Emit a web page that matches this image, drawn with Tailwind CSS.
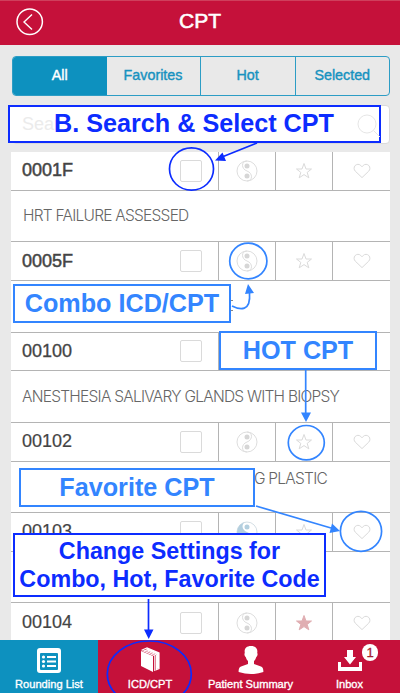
<!DOCTYPE html>
<html lang="en">
<head>
    <meta charset="UTF-8">
    <meta name="viewport" content="width=device-width, initial-scale=1.0">
    <title>CPT</title>
    <script src="https://cdn.jsdelivr.net/npm/@tailwindcss/browser@4"></script>
</head>
<body class="bg-[#e9e9e9] font-['Liberation_Sans',Arial,sans-serif]">
    <div class="relative flex h-[693px] w-[400px] flex-col overflow-hidden">
        <!-- Shared icons -->
        <svg class="hidden">
            <symbol id="combo" viewBox="0 0 22 22">
                <circle cx="11" cy="11" r="10" fill="none" stroke="#dedede"/>
                <path d="M11 1C5 1 5 9 11 11C17 13 17 21 11 21" fill="none" stroke="#dedede"/>
                <circle cx="11" cy="6" r="2.5" fill="#d6d6d6"/>
                <circle cx="11" cy="16" r="2.5" fill="#d6d6d6"/>
            </symbol>
            <symbol id="star" viewBox="0 0 18 18">
                <path d="M9 1.5L11 7H16.5L12.2 10.4L13.8 15.8L9 12.6L4.2 15.8L5.8 10.4L1.5 7H7Z" stroke-linejoin="round"/>
            </symbol>
            <symbol id="heart" viewBox="0 0 18 16">
                <path d="M9 14.6L2.3 8.2C.8 6.6.7 4.2 2.1 2.6C3.6 1 6.2.9 7.7 2.4L9 3.8L10.3 2.4C11.8.9 14.4 1 15.9 2.6C17.3 4.2 17.2 6.6 15.7 8.2Z" fill="none" stroke="#dadada"/>
            </symbol>
        </svg>

        <!-- Header -->
        <header class="relative flex h-[45px] shrink-0 items-center justify-center border-t border-[#cf3f5c] bg-[#c5113a] pb-1">
            <svg class="absolute top-[7px] left-4" width="28" height="28" viewBox="0 0 28 28" fill="none" stroke="#fff">
                <circle cx="13.7" cy="13.8" r="12.7" stroke-width="1.5"/>
                <path d="M16 6.5L8 14L16 21.5" stroke-width="1.4"/>
            </svg>
            <h1 class="text-[21px] text-white [-webkit-text-stroke:0.6px_white]">CPT</h1>
        </header>

        <!-- Filter tabs -->
        <nav class="mt-[11px] mr-[10px] ml-3 flex h-10 shrink-0 overflow-hidden rounded border border-[#2d9dc5] text-[14.3px] text-[#1792bf] [-webkit-text-stroke:0.4px_#1792bf]">
            <div class="flex w-[93.5px] items-center justify-center bg-[#0d91bf] text-white [-webkit-text-stroke:0.4px_white]">All</div>
            <div class="flex w-[94px] items-center justify-center border-r border-[#2d9dc5]">Favorites</div>
            <div class="flex w-[95px] items-center justify-center border-r border-[#2d9dc5]">Hot</div>
            <div class="flex flex-1 items-center justify-center">Selected</div>
        </nav>

        <!-- Search -->
        <div class="mt-[9px] mr-[10px] ml-3 flex h-[39px] shrink-0 items-center rounded border border-[#dadada] bg-white pl-[9px] text-[18px] text-[#e8e8e8]">Search</div>

        <!-- Code list -->
        <main class="mt-2 mr-[10px] ml-[11px] h-[489px] shrink-0 overflow-hidden bg-white text-[18px] text-[#444]">
            <div class="flex h-[38.75px] items-center border-b border-[#b4b4b4]">
                <span class="w-[169px] pl-[11px] [-webkit-text-stroke:0.5px_#444]">0001F</span>
                <span class="h-[22px] w-[22px] rounded-xs border border-[#dadada]"></span>
                <span class="ml-4 flex h-full w-[57px] items-center justify-center border-l border-[#b4b4b4]"><svg width="22" height="22"><use href="#combo"/></svg></span>
                <span class="flex h-full w-[57px] items-center justify-center border-l border-[#b4b4b4]"><svg class="fill-none stroke-[#dadada]" width="18" height="18"><use href="#star"/></svg></span>
                <span class="flex h-full flex-1 items-center justify-center border-l border-[#b4b4b4]"><svg width="18" height="16"><use href="#heart"/></svg></span>
            </div>
            <div class="flex h-[51.5px] items-center border-b border-[#b4b4b4] pl-3 font-[Inter] text-[15.5px] font-light tracking-[-0.75px] text-[#666]">HRT FAILURE ASSESSED</div>

            <div class="flex h-[38.75px] items-center border-b border-[#b4b4b4]">
                <span class="w-[169px] pl-[11px] [-webkit-text-stroke:0.5px_#444]">0005F</span>
                <span class="h-[22px] w-[22px] rounded-xs border border-[#dadada]"></span>
                <span class="ml-4 flex h-full w-[57px] items-center justify-center border-l border-[#b4b4b4]"><svg width="22" height="22"><use href="#combo"/></svg></span>
                <span class="flex h-full w-[57px] items-center justify-center border-l border-[#b4b4b4]"><svg class="fill-none stroke-[#dadada]" width="18" height="18"><use href="#star"/></svg></span>
                <span class="flex h-full flex-1 items-center justify-center border-l border-[#b4b4b4]"><svg width="18" height="16"><use href="#heart"/></svg></span>
            </div>
            <div class="h-[51.5px] border-b border-[#b4b4b4]"></div>

            <div class="flex h-[38.75px] items-center border-b border-[#b4b4b4]">
                <span class="w-[169px] pl-[11px] [-webkit-text-stroke:0.3px_#444]">00100</span>
                <span class="h-[22px] w-[22px] rounded-xs border border-[#dadada]"></span>
                <span class="ml-4 flex h-full w-[57px] items-center justify-center border-l border-[#b4b4b4]"><svg width="22" height="22"><use href="#combo"/></svg></span>
                <span class="flex h-full w-[57px] items-center justify-center border-l border-[#b4b4b4]"><svg class="fill-none stroke-[#dadada]" width="18" height="18"><use href="#star"/></svg></span>
                <span class="flex h-full flex-1 items-center justify-center border-l border-[#b4b4b4]"><svg width="18" height="16"><use href="#heart"/></svg></span>
            </div>
            <div class="flex h-[51.5px] items-center border-b border-[#b4b4b4] pl-[11px] font-[Inter] text-[15.5px] font-light tracking-[-0.75px] whitespace-nowrap text-[#666]">ANESTHESIA SALIVARY GLANDS WITH BIOPSY</div>

            <div class="flex h-[38.75px] items-center border-b border-[#b4b4b4]">
                <span class="w-[169px] pl-[11px] [-webkit-text-stroke:0.2px_#444]">00102</span>
                <span class="h-[22px] w-[22px] rounded-xs border border-[#dadada]"></span>
                <span class="ml-4 flex h-full w-[57px] items-center justify-center border-l border-[#b4b4b4]"><svg class="-scale-x-100" width="22" height="22"><use href="#combo"/></svg></span>
                <span class="flex h-full w-[57px] items-center justify-center border-l border-[#b4b4b4]"><svg class="fill-none stroke-[#dadada]" width="18" height="18"><use href="#star"/></svg></span>
                <span class="flex h-full flex-1 items-center justify-center border-l border-[#b4b4b4]"><svg width="18" height="16"><use href="#heart"/></svg></span>
            </div>
            <div class="flex h-[51.5px] items-start justify-end border-b border-[#b4b4b4] pt-[5px] pr-[63px] font-[Inter] text-[15.5px] font-light tracking-[-0.75px] text-[#666]">G PLASTIC</div>

            <div class="flex h-[38.75px] items-center border-b border-[#b4b4b4]">
                <span class="w-[169px] pl-[11px] [-webkit-text-stroke:0.2px_#444]">00103</span>
                <span class="h-[22px] w-[22px] rounded-xs border border-[#dadada]"></span>
                <span class="ml-4 flex h-full w-[57px] items-center justify-center border-l border-[#b4b4b4]">
                    <svg width="22" height="22" viewBox="0 0 22 22">
                        <circle cx="11" cy="11" r="10" fill="#fff" stroke="#d5dfe5"/>
                        <path d="M11 1C5 1 5 9 11 11C17 13 17 21 11 21A10 10 0 0 1 11 1Z" fill="#b3cfdf"/>
                        <circle cx="11" cy="6" r="2.5" fill="#b3cfdf"/>
                        <circle cx="11" cy="16" r="2.5" fill="#fff"/>
                    </svg>
                </span>
                <span class="flex h-full w-[57px] items-center justify-center border-l border-[#b4b4b4]"><svg class="fill-none stroke-[#dadada]" width="18" height="18"><use href="#star"/></svg></span>
                <span class="flex h-full flex-1 items-center justify-center border-l border-[#b4b4b4]"><svg width="18" height="16"><use href="#heart"/></svg></span>
            </div>
            <div class="h-[51.5px] border-b border-[#b4b4b4]"></div>

            <div class="flex h-[38.75px] items-center">
                <span class="w-[169px] pl-[11px] [-webkit-text-stroke:0.2px_#444]">00104</span>
                <span class="h-[22px] w-[22px] rounded-xs border border-[#dadada]"></span>
                <span class="ml-4 flex h-full w-[57px] items-center justify-center border-l border-[#b4b4b4]"><svg width="22" height="22"><use href="#combo"/></svg></span>
                <span class="flex h-full w-[57px] items-center justify-center border-l border-[#b4b4b4]"><svg class="fill-[#e0aeb2] stroke-[#e0aeb2]" width="18" height="18"><use href="#star"/></svg></span>
                <span class="flex h-full flex-1 items-center justify-center border-l border-[#b4b4b4]"><svg width="18" height="16"><use href="#heart"/></svg></span>
            </div>
        </main>

        <!-- Bottom bar -->
        <footer class="-mt-px flex h-[53px] shrink-0 bg-[#c5113a] text-[11.1px] leading-4 text-white [-webkit-text-stroke:0.35px_white]">
            <div class="flex w-[98px] flex-col items-center bg-[#0d91bf] pt-[7px]">
                <svg width="26" height="26" viewBox="0 0 26 26">
                    <rect x="1" y="1" width="24" height="25" rx="3" fill="#fff"/>
                    <rect x="4" y="6" width="18" height="17" rx="1" fill="#0d91bf"/>
                    <path d="M11 10H20M11 14.5H20M11 19H20" stroke="#fff" stroke-width="2"/>
                    <g fill="#fff"><circle cx="7.5" cy="10" r="1.6"/><circle cx="7.5" cy="14.5" r="1.6"/><circle cx="7.5" cy="19" r="1.6"/></g>
                </svg>
                <span class="mt-[3px]">Rounding List</span>
            </div>
            <div class="flex w-[104px] flex-col items-center pt-[7px]">
                <svg width="20" height="26" viewBox="0 0 20 26">
                    <path d="M1 4L13 9V25L1 19Z" fill="#fff"/>
                    <path d="M1.5 3.2L7 1L19 6V21.5L16.5 22.5V8L5.5 3.3L3.5 4L14.8 8.8V24" fill="none" stroke="#fff" stroke-width="1.2"/>
                    <path d="M7 1L19 6V21L17 22V7.5L6 3Z" fill="#fff"/>
                </svg>
                <span class="mt-[3px]">ICD/CPT</span>
            </div>
            <div class="flex w-[97px] flex-col items-center pt-1">
                <svg width="26" height="30" viewBox="0 0 26 30" fill="#fff">
                    <path d="M13 2C8 2 6 5 6.8 9C6 10 6.6 12 7.7 13C8.3 15 9 16 10 17V20L3 22.5C1 23.5.6 25 .6 28Q7 30 13 30Q19 30 25.4 28C25.4 25 25 23.5 23 22.5L16 20V17C17 16 17.7 15 18.3 13C19.4 12 20 10 19.2 9C20 5 18 2 13 2Z"/>
                </svg>
                <span class="mt-[2px] whitespace-nowrap">Patient Summary</span>
            </div>
            <div class="relative flex flex-1 flex-col items-center pt-[9px]">
                <svg width="26" height="24" viewBox="0 0 26 24" fill="#fff">
                    <path d="M10 1H16V8H19L13 15.5L7 8H10Z"/>
                    <path d="M1 13H4V18H22V13H25V22H1Z"/>
                </svg>
                <span class="mt-[3px]">Inbox</span>
                <span class="absolute top-1 left-[63px] flex h-[17px] w-4 items-center justify-center rounded-full bg-white text-[13px] text-[#a52030] [-webkit-text-stroke:0.3px_#a52030]">1</span>
            </div>
        </footer>

        <!-- Callout arrows and rings -->
        <svg class="absolute inset-0" width="400" height="693" fill="none" stroke-width="2">
            <g stroke="#0c2cff" stroke-width="1.7">
                <ellipse cx="191.5" cy="169" rx="22" ry="21.2"/>
                <path d="M257 143L222 157M148.5 599V630"/>
                <ellipse cx="149.3" cy="674" rx="42" ry="33"/>
                <path d="M215 160.5L222.5 152.5L226 161ZM144 629.5H153.5L148.7 639Z" fill="#0c2cff" stroke="none"/>
            </g>
            <g stroke="#3385ff" stroke-width="1.7">
                <ellipse cx="248.3" cy="261" rx="18.6" ry="17.8"/>
                <path d="M232 306C240 310 251 312 249.5 293"/>
                <path d="M305.7 370V413"/>
                <ellipse cx="306.3" cy="442.7" rx="18" ry="17.2"/>
                <path d="M256 506L331 528"/>
                <ellipse cx="361" cy="531.3" rx="20.6" ry="20"/>
                <path d="M248 284L254 293L245 294ZM301 412.5H311L306 422ZM340 531L329.5 533L332 523.5Z" fill="#3385ff" stroke="none"/>
            </g>
            <path d="M231 300.5H233M231 310.5H233" stroke="#888" stroke-width="1"/>
        </svg>

        <!-- Callout labels -->
        <div class="absolute top-[105px] left-[8px] flex h-[38px] w-[373px] items-center justify-center border-2 border-[#0c2cff] bg-white pr-px text-[25.2px] font-bold whitespace-nowrap text-[#0c2cff]">
            <span class="absolute left-3 text-[18px] font-normal text-[#ebebeb]">Sear</span>
            <svg class="absolute top-[6px] right-[-3px]" width="26" height="26" fill="none" stroke="#e6e6e6"><circle cx="11" cy="11" r="9"/><path d="M17.5 17.5L24 24"/></svg>
            <span class="relative">B. Search &amp; Select CPT</span>
        </div>
        <div class="absolute top-[284px] left-[13px] flex h-[39px] w-[218px] items-center justify-center border-2 border-[#3385ff] bg-white text-[25.2px] font-bold whitespace-nowrap text-[#3385ff]">Combo ICD/CPT</div>
        <div class="absolute top-[331px] left-[219px] flex h-[39px] w-[158px] items-center justify-center border-2 border-[#3385ff] bg-white text-[25.2px] font-bold whitespace-nowrap text-[#3385ff]">HOT CPT</div>
        <div class="absolute top-[468px] left-[19px] flex h-[39px] w-[236px] items-center justify-center border-2 border-[#3385ff] bg-white text-[25.2px] font-bold whitespace-nowrap text-[#3385ff]">Favorite CPT</div>
        <div class="absolute top-[533px] left-[13px] flex h-[64px] w-[313px] flex-col items-center justify-center border-2 border-[#0c2cff] bg-white text-[23.3px] leading-[28px] font-bold whitespace-nowrap text-[#0c2cff]">
            <span>Change Settings for</span>
            <span>Combo, Hot, Favorite Code</span>
        </div>
    </div>
</body>
</html>
